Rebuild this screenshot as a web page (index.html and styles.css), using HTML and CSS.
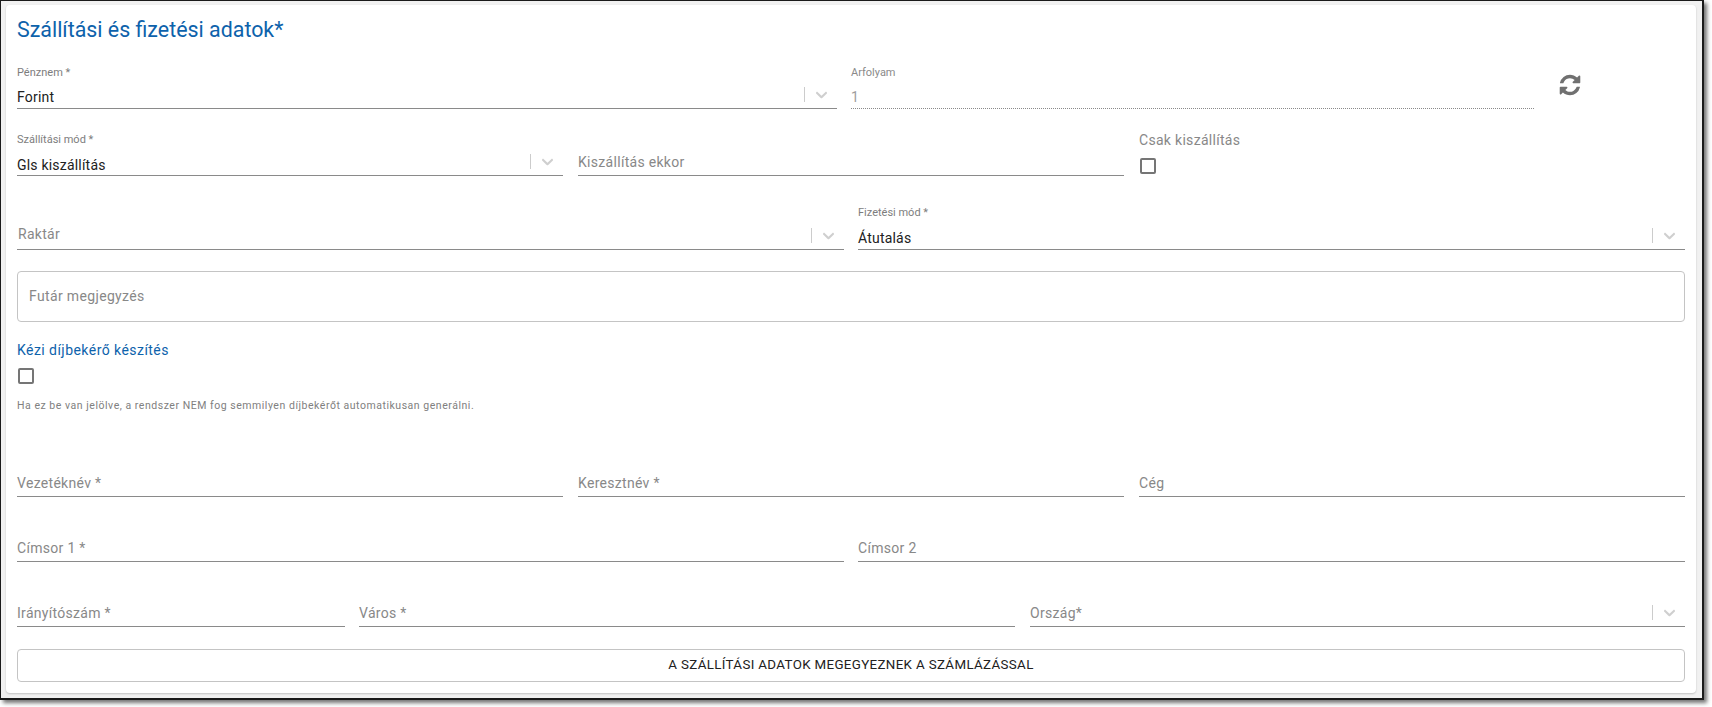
FILE: index.html
```html
<!DOCTYPE html>
<html lang="hu">
<head>
<meta charset="utf-8">
<title>Szállítási és fizetési adatok</title>
<link rel="stylesheet" href="styles.css">
</head>
<body>
<svg class="defs" width="0" height="0" aria-hidden="true">
  <symbol id="chev" viewBox="0 0 20 20"><path d="M4.516 7.548c0.436-0.446 1.043-0.481 1.576 0l3.908 3.747 3.908-3.747c0.533-0.481 1.141-0.446 1.574 0 0.436 0.445 0.408 1.197 0 1.615-0.406 0.418-4.695 4.502-4.695 4.502-0.217 0.223-0.502 0.335-0.787 0.335s-0.57-0.112-0.789-0.335c0 0-4.287-4.084-4.695-4.502s-0.436-1.17 0-1.615z"/></symbol>
</svg>
<div class="frame">
  <main class="card">
    <h1 class="title">Szállítási és fizetési adatok*</h1>

    <div class="row r1">
      <div class="field"><span class="label">Pénznem *</span><div class="control"><span class="value">Forint</span><span class="sep"></span><svg class="chev"><use href="#chev"/></svg></div></div>
      <div class="field disabled"><span class="label">Arfolyam</span><div class="control"><span class="value">1</span></div></div>
      <div class="refresh"><svg viewBox="0 0 1792 1792"><path d="M1639 1056q0 5-1 7-64 268-268 434.5t-478 166.5q-146 0-282.5-55t-243.5-157l-129 129q-19 19-45 19t-45-19-19-45v-448q0-26 19-45t45-19h448q26 0 45 19t19 45-19 45l-137 137q71 66 161 102t187 36q134 0 250-65t186-179q11-17 53-117 8-23 30-23h192q13 0 22.5 9.5t9.5 22.5zm25-800v448q0 26-19 45t-45 19h-448q-26 0-45-19t-19-45 19-45l138-138q-148-137-349-137-134 0-250 65t-186 179q-11 17-53 117-8 23-30 23h-199q-13 0-22.5-9.5t-9.5-22.5v-7q65-268 270-434.5t480-166.5q146 0 284 55.5t245 156.5l130-129q19-19 45-19t45 19 19 45z"/></svg></div>
    </div>

    <div class="row r2">
      <div class="field"><span class="label">Szállítási mód *</span><div class="control"><span class="value">Gls kiszállítás</span><span class="sep"></span><svg class="chev"><use href="#chev"/></svg></div></div>
      <div class="field"><div class="control"><span class="placeholder">Kiszállítás ekkor</span></div></div>
      <div class="check-col"><span class="check-label">Csak kiszállítás</span><span class="box"></span></div>
    </div>

    <div class="row r3">
      <div class="field"><div class="control"><span class="placeholder indent">Raktár</span><span class="sep"></span><svg class="chev"><use href="#chev"/></svg></div></div>
      <div class="field"><span class="label">Fizetési mód *</span><div class="control"><span class="value">Átutalás</span><span class="sep"></span><svg class="chev"><use href="#chev"/></svg></div></div>
    </div>

    <div class="note">Futár megjegyzés</div>

    <div class="manual">
      <span class="manual-title">Kézi díjbekérő készítés</span>
      <span class="box"></span>
      <p class="help">Ha ez be van jelölve, a rendszer NEM fog semmilyen díjbekérőt automatikusan generálni.</p>
    </div>

    <div class="row r4">
      <div class="field"><div class="control"><span class="placeholder">Vezetéknév *</span></div></div>
      <div class="field"><div class="control"><span class="placeholder">Keresztnév *</span></div></div>
      <div class="field"><div class="control"><span class="placeholder">Cég</span></div></div>
    </div>

    <div class="row r5">
      <div class="field"><div class="control"><span class="placeholder">Címsor 1 *</span></div></div>
      <div class="field"><div class="control"><span class="placeholder">Címsor 2</span></div></div>
    </div>

    <div class="row r6">
      <div class="field"><div class="control"><span class="placeholder">Irányítószám *</span></div></div>
      <div class="field"><div class="control"><span class="placeholder">Város *</span></div></div>
      <div class="field"><div class="control"><span class="placeholder">Ország*</span><span class="sep"></span><svg class="chev"><use href="#chev"/></svg></div></div>
    </div>

    <button class="copy" type="button">A SZÁLLÍTÁSI ADATOK MEGEGYEZNEK A SZÁMLÁZÁSSAL</button>
  </main>
</div>
</body>
</html>
```
FILE: styles.css
```css
* { box-sizing: border-box; }
html, body { margin: 0; padding: 0; background: #fff; height: 100%; overflow: hidden; }
body { font-family: Roboto, "Liberation Sans", sans-serif; color: #212121; }
.defs { display: block; height: 0; }

.frame {
  width: 1704px;
  height: 700px;
  border-style: solid;
  border-color: #1a1a1a;
  border-width: 1px 2px 2px 1px;
  background: #f1f1f1;
  padding: 4px 6px 5px 5px;
  box-shadow: 3px 3px 4px rgba(0, 0, 0, 0.55);
}
.card {
  height: 100%;
  background: #fff;
  border-radius: 4px;
  padding: 0 11px 0 11px;
  box-shadow: 0 1px 2px rgba(0, 0, 0, 0.2);
}
.title {
  margin: 0;
  padding-top: 12px;
  height: 49px;
  font-size: 21.4px;
  font-weight: 400;
  line-height: 26px;
  color: #0d62ab;
}

.row { display: grid; column-gap: 14px; align-items: end; }
.r1 { height: 55px; grid-template-columns: 820px 683px 1fr; }
.r2 { height: 67px; column-gap: 15px; grid-template-columns: 546px 546px 1fr; }
.r3 { height: 74px; grid-template-columns: 827px 1fr; }
.r4 { height: 70px; column-gap: 15px; grid-template-columns: 546px 546px 1fr; }
.r5 { height: 65px; grid-template-columns: 827px 1fr; }
.r6 { height: 65px; grid-template-columns: 328px 656px 1fr; }
.r6 .field:last-child { margin-left: 1px; }

.field { display: flex; flex-direction: column; min-width: 0; }
.label { font-size: 11px; line-height: 14px; color: #7d7d7d; margin-bottom: 5px; }
.r3 .label { margin-bottom: 6px; }
.control {
  display: flex;
  align-items: center;
  height: 24px;
  border-bottom: 1px solid #8a8a8a;
  font-size: 14px;
}
.value { flex: 1; color: #212121; font-size: 14px; letter-spacing: 0.2px; }
.r2 .value { padding-top: 2px; }
.placeholder { flex: 1; color: #888; font-size: 14px; letter-spacing: 0.3px; padding-bottom: 4px; }
.r3 .placeholder { padding-bottom: 8px; }
.indent { padding-left: 1px; }
.sep { width: 1px; height: 15px; background: #ccc; margin-bottom: 5px; }
.chev { width: 19px; height: 19px; margin: 0 6px 5px 7px; fill: #cfcfcf; }

.disabled .control { border-bottom: 1px dotted #8a8a8a; }
.disabled .value { color: #9e9e9e; }
.disabled .label { color: #8a8a8a; }

.refresh { align-self: start; padding: 19px 0 0 10px; }
.refresh svg { display: block; width: 24px; height: 24px; fill: #707070; }

.check-col { display: flex; flex-direction: column; align-self: end; padding-bottom: 2px; }
.check-label { font-size: 14px; line-height: 16px; color: #888; letter-spacing: 0.3px; margin-bottom: 10px; }
.box {
  display: block;
  width: 16px;
  height: 16px;
  border: 2px solid #757575;
  border-radius: 2px;
  background: #fff;
}
.check-col .box { margin-left: 1px; }

.note {
  margin-top: 21px;
  height: 51px;
  border: 1px solid #c4c4c4;
  border-radius: 4px;
  padding: 15px 11px 0;
  font-size: 14px;
  line-height: 18px;
  color: #888;
  letter-spacing: 0.35px;
}

.manual { display: block; padding-top: 20px; height: 105px; }
.manual-title { display: block; font-size: 14px; line-height: 16px; color: #0d62ab; letter-spacing: 0.45px; margin-bottom: 10px; }
.manual .box { margin-left: 1px; }
.help { margin: 15px 0 0; font-size: 10.5px; line-height: 14px; color: #808080; letter-spacing: 0.53px; }

.copy {
  display: block;
  width: 100%;
  margin-top: 22px;
  height: 33px;
  padding: 0 0 2px;
  border: 1px solid #c4c4c4;
  border-radius: 4px;
  background: #fff;
  font-family: inherit;
  font-size: 13.33px;
  color: #212121;
  letter-spacing: 0.35px;
}
```
